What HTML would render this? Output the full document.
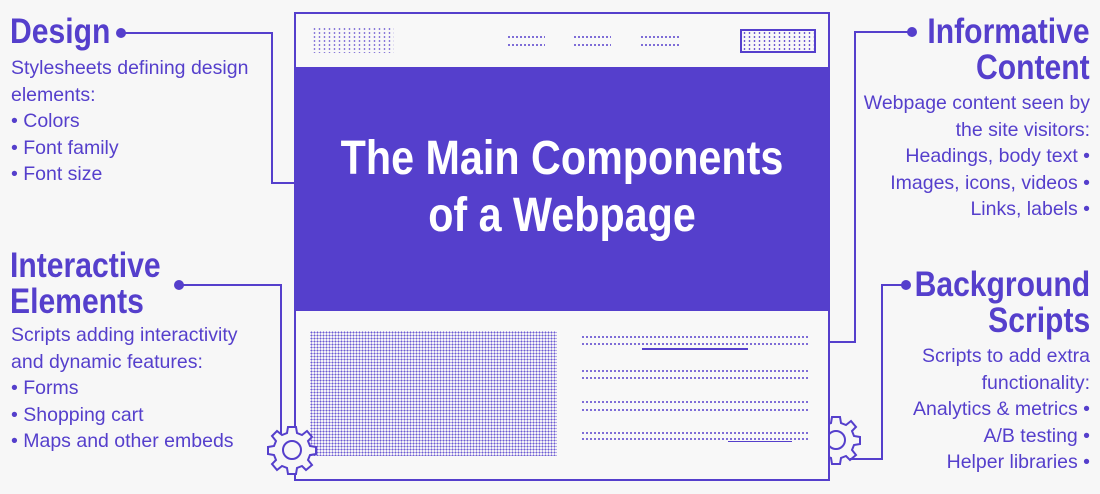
<!DOCTYPE html>
<html><head><meta charset="utf-8"><style>
body{margin:0;width:1100px;height:494px;background:#f7f7f7;position:relative;overflow:hidden;font-family:"Liberation Sans",sans-serif;color:#553fcc}
.a{position:absolute}
.h{font-weight:bold;font-size:35px;line-height:36px;transform:scaleX(0.86);transform-origin:left top;white-space:nowrap}
.hr{transform-origin:right top;text-align:right}
.t{font-size:19.5px;line-height:26.5px;white-space:nowrap}
.r{text-align:right}
.ln{position:absolute;background:#553fcc}
.dot{position:absolute;width:10px;height:10px;border-radius:50%;background:#553fcc}
.dl{position:absolute;height:2px;background:radial-gradient(circle,#553fcc 0.8px,transparent 1px) 0 0/4px 2px}
</style></head><body>
<!-- connectors -->
<div class="dot" style="left:116px;top:28px"></div>
<div class="ln" style="left:121px;top:32px;width:152px;height:2px"></div>
<div class="ln" style="left:271px;top:32px;width:2px;height:152px"></div>
<div class="ln" style="left:271px;top:182px;width:25px;height:2px"></div>

<div class="dot" style="left:174px;top:280px"></div>
<div class="ln" style="left:180px;top:284px;width:102px;height:2px"></div>
<div class="ln" style="left:280px;top:284px;width:2px;height:150px"></div>

<div class="dot" style="left:907px;top:27px"></div>
<div class="ln" style="left:854px;top:31px;width:56px;height:2px"></div>
<div class="ln" style="left:854px;top:31px;width:2px;height:312px"></div>
<div class="ln" style="left:828px;top:341px;width:28px;height:2px"></div>

<div class="dot" style="left:901px;top:280px"></div>
<div class="ln" style="left:881px;top:284px;width:24px;height:2px"></div>
<div class="ln" style="left:881px;top:284px;width:2px;height:176px"></div>
<div class="ln" style="left:850px;top:458px;width:33px;height:2px"></div>

<!-- right gear -->
<svg class="a" style="left:808px;top:412px" width="56" height="56" viewBox="-28 -28 56 56">
<g fill="none" stroke="#553fcc" stroke-width="2">
<path d="M-4,-23 L4,-23 L5,-17 L10,-15 L15,-19 L20,-13 L16,-9 L18,-4 L24,-3 L24,4 L18,5 L16,10 L20,15 L14,20 L10,16 L5,18 L4,24 L-4,24 L-5,18 L-10,16 L-15,20 L-20,14 L-16,10 L-18,5 L-24,4 L-24,-3 L-18,-4 L-16,-9 L-20,-14 L-15,-19 L-10,-15 L-5,-17 Z"/>
<circle r="9"/></g></svg>

<!-- frame -->
<div class="a" style="left:294px;top:12px;width:532px;height:465px;border:2px solid #553fcc;background:#f8f8f8"></div>
<div class="a" style="left:296px;top:67px;width:532px;height:244px;background:#553fcc"></div>
<!-- header placeholders -->
<div class="a" style="left:312px;top:27px;width:82px;height:26px;background:radial-gradient(circle,#553fcc 0.7px,transparent 1px) 0 0/5px 4px;opacity:.8"></div>
<div class="dl" style="left:507px;top:36px;width:38px"></div><div class="dl" style="left:507px;top:44px;width:38px"></div>
<div class="dl" style="left:573px;top:36px;width:38px"></div><div class="dl" style="left:573px;top:44px;width:38px"></div>
<div class="dl" style="left:640px;top:36px;width:40px"></div><div class="dl" style="left:640px;top:44px;width:40px"></div>
<div class="a" style="left:740px;top:29px;width:72px;height:20px;border:2px solid #553fcc;background:radial-gradient(circle,#553fcc 0.7px,transparent 1px) 0 0/5px 4px"></div>
<!-- title -->
<div class="a" style="left:296px;top:130px;width:532px;text-align:center;color:#fff;font-weight:bold;font-size:48px;line-height:57px;transform:scaleX(0.86);transform-origin:center top;white-space:nowrap">The Main Components<br>of a Webpage</div>
<!-- image block -->
<div class="a" style="left:310px;top:331px;width:247px;height:125px;background:radial-gradient(circle,#553fcc 0.8px,transparent 1.1px) 0 0/3px 3px;opacity:.85"></div>
<!-- text lines -->
<div class="dl" style="left:581px;top:336px;width:228px"></div>
<div class="dl" style="left:581px;top:343px;width:228px"></div>
<div class="ln" style="left:642px;top:348px;width:106px;height:2px"></div>
<div class="dl" style="left:581px;top:370px;width:228px"></div><div class="dl" style="left:581px;top:377px;width:228px"></div>
<div class="dl" style="left:581px;top:401px;width:228px"></div><div class="dl" style="left:581px;top:409px;width:228px"></div>
<div class="dl" style="left:581px;top:432px;width:228px"></div><div class="dl" style="left:581px;top:438px;width:228px"></div>
<div class="ln" style="left:728px;top:441px;width:64px;height:1px"></div>

<!-- left gear -->
<svg class="a" style="left:264px;top:422px" width="56" height="56" viewBox="-28 -28 56 56">
<g fill="#f7f7f7" stroke="#553fcc" stroke-width="2">
<path d="M-4,-23 L4,-23 L5,-17 L10,-15 L15,-19 L20,-13 L16,-9 L18,-4 L24,-3 L24,4 L18,5 L16,10 L20,15 L14,20 L10,16 L5,18 L4,24 L-4,24 L-5,18 L-10,16 L-15,20 L-20,14 L-16,10 L-18,5 L-24,4 L-24,-3 L-18,-4 L-16,-9 L-20,-14 L-15,-19 L-10,-15 L-5,-17 Z"/>
<circle r="9"/></g></svg>

<!-- left texts -->
<div class="a h" style="left:10px;top:14px">Design</div>
<div class="a t" style="left:11px;top:55px">Stylesheets defining design<br>elements:<br>• Colors<br>• Font family<br>• Font size</div>
<div class="a h" style="left:10px;top:248px">Interactive<br>Elements</div>
<div class="a t" style="left:11px;top:322px">Scripts adding interactivity<br>and dynamic features:<br>• Forms<br>• Shopping cart<br>• Maps and other embeds</div>

<!-- right texts -->
<div class="a h hr" style="right:10px;top:14px">Informative<br>Content</div>
<div class="a t r" style="right:10px;top:90px">Webpage content seen by<br>the site visitors:<br>Headings, body text •<br>Images, icons, videos •<br>Links, labels •</div>
<div class="a h hr" style="right:10px;top:267px">Background<br>Scripts</div>
<div class="a t r" style="right:10px;top:343px">Scripts to add extra<br>functionality:<br>Analytics &amp; metrics •<br>A/B testing •<br>Helper libraries •</div>
</body></html>
